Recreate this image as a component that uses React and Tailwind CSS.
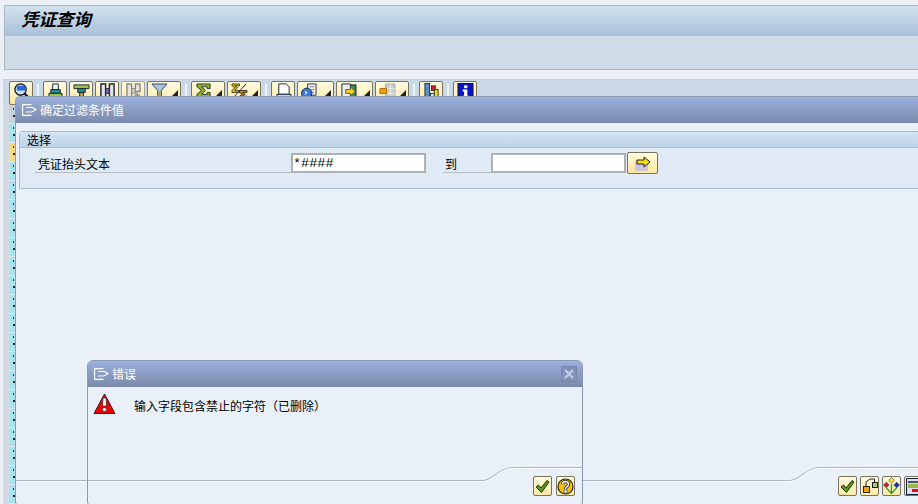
import React from 'react';

function Btn({ w = 'w-[24px]', children, drop, faded }) {
  return (
    <div className={`relative flex h-[24px] ${w} shrink-0 items-start rounded-[2px] border border-[#77735f] bg-gradient-to-b from-[#fffbe0] to-[#fde79c] pl-[3px] pt-px ${faded ? 'border-[#a5a294]' : ''}`}>
      {children}
      {drop && <span className="absolute top-[2px] bottom-[2px] right-[11px] w-px bg-[#fff8dc]" />}
      {drop && (
        <svg className="absolute right-[2px] top-[8px]" width="6" height="6"><path d="M6 0V6H0Z" fill="#222" /></svg>
      )}
    </div>
  );
}

const Sep = () => <div className="mx-[2px] mt-[3px] h-[16px] w-[2px] shrink-0 bg-[#eef3f8]" />;

const Ico = ({ children }) => <svg width="17" height="16" viewBox="0 0 18 17">{children}</svg>;

const Search = () => (
  <Ico>
    <circle cx="8" cy="7" r="6" fill="#cfe0f2" stroke="#223" strokeWidth="1.5" />
    <rect x="4" y="3" width="9" height="5" fill="#2a6ad8" />
    <path d="M12 11l5 5" stroke="#223" strokeWidth="2.5" />
  </Ico>
);
const Print = () => (
  <Ico>
    <path d="M6 1h6v6H6Z" fill="#f4f4f4" stroke="#123" />
    <path d="M4 7h10v4H4Z" fill="#2c8f8f" stroke="#123" />
    <path d="M2 11h14v5H2Z" fill="#9fc04a" stroke="#123" />
  </Ico>
);
const Funnel = () => (
  <Ico>
    <path d="M1 2h16v4H1Z" fill="#9fc04a" stroke="#123" />
    <path d="M5 6h8v4H5Z" fill="#2c8f8f" stroke="#123" />
    <path d="M7 10h4v6H7Z" fill="#c9a020" stroke="#123" />
  </Ico>
);
const Binoc = ({ c = '#6f6fa8', s = '#223' }) => (
  <Ico>
    <path d="M2 1h5v15H2ZM11 1h5v15h-5Z" fill="#dfe3f2" stroke={s} strokeWidth="1.5" />
    <path d="M7 6h4v5H7Z" fill={c} stroke={s} />
  </Ico>
);
const BinocPlus = () => (
  <Ico>
    <path d="M2 1h5v15H2ZM11 1h5v8h-5Z" fill="#e8e6da" stroke="#8b8b84" strokeWidth="1.5" />
    <path d="M7 6h4v5H7Z" fill="#c8c8c0" stroke="#8b8b84" />
    <path d="M13 10v6M10 13h6" stroke="#9a9a92" strokeWidth="2" />
  </Ico>
);
const Filter = () => (
  <Ico>
    <path d="M1 1h16l-6 7v8l-4-3V8Z" fill="#a9c4dc" stroke="#345" />
    <path d="M8 9h2v5H8Z" fill="#c9a020" />
  </Ico>
);
const Sum = () => (
  <Ico>
    <path d="M2 1h14v5h-3V4H7l4 4-4 4h6v-2h3v5H2v-3l5-4-5-4Z" fill="#8fb020" stroke="#234" />
  </Ico>
);
const SubSum = () => (
  <Ico>
    <path d="M1 1h8v2H4l3 2-3 3h5v2H1V8l3-3-3-2Z" fill="#e8c800" stroke="#111" strokeWidth=".8" />
    <path d="M9 8h8v2h-5l3 2-3 2h5v2H9v-2l3-2-3-2Z" fill="#ef8000" stroke="#111" strokeWidth=".8" />
    <path d="M16 1L2 16" stroke="#222" />
  </Ico>
);
const Doc = () => (
  <Ico>
    <path d="M4 1h8l3 3v8H4Z" fill="#fff" stroke="#123" />
    <path d="M2 12h15v4H2Z" fill="#bcd9ee" stroke="#123" />
  </Ico>
);
const Globe = () => (
  <Ico>
    <path d="M7 1h9v12H7Z" fill="#eee" stroke="#333" />
    <path d="M9 4h5M9 7h5M9 10h5" stroke="#789" />
    <circle cx="6" cy="11" r="5.500" fill="#3a78d8" stroke="#124" />
    <path d="M4 8l3 2-2 3z" fill="#dfeef8" />
  </Ico>
);
const Export = () => (
  <Ico>
    <path d="M9 2h8v14H9Z" fill="#3f8f3f" stroke="#123" />
    <path d="M2 1h9v15H2Z" fill="#eee" stroke="#123" />
    <path d="M6 7h5V4l5 5-5 5v-3H6Z" fill="#f7d820" stroke="#554" />
  </Ico>
);
const Grid = () => (
  <Ico>
    <path d="M7 1h10v15H7Z" fill="#ccc" stroke="#aaa" />
    <path d="M7 6h10M7 11h10M12 1v15" stroke="#eee" />
    <rect x="1" y="6" width="7" height="5" fill="#f7a010" stroke="#a60" />
  </Ico>
);
const Chart = () => (
  <Ico>
    <rect x="2" y="0.500" width="5" height="16" fill="#5b8fc0" stroke="#234" />
    <rect x="9" y="3" width="4" height="5" fill="#e02020" stroke="#234" />
    <rect x="8" y="11" width="4" height="6" fill="#dfeaf6" stroke="#234" />
    <rect x="12" y="7" width="4" height="10" fill="#f7d820" stroke="#234" />
  </Ico>
);
const Info = () => (
  <Ico>
    <rect x="1" y="0.500" width="16" height="16" fill="#0a12c8" stroke="#111" />
    <rect x="7.500" y="2.500" width="3.500" height="3" fill="#fff" />
    <path d="M6 7h5v6.500h1.500v2h-7v-2h2V9H6Z" fill="#fff" />
  </Ico>
);

const Check = () => (
  <svg width="15" height="15" viewBox="0 0 15 15">
    <path d="M1 8l2.500-2 2.500 3 6-7.500L14 3 6.500 13.500Z" fill="#5f9a10" stroke="#1c3006" strokeWidth="1" />
  </svg>
);
const Help = () => (
  <svg width="17" height="17" viewBox="0 0 17 17">
    <circle cx="8.500" cy="8.500" r="7.500" fill="#f7c400" stroke="#222" strokeWidth="1.200" />
    <path d="M5.500 6.500C5.500 2.500 11.500 2.500 11.500 6.500C11.500 8.800 8.500 8.500 8.500 11" fill="none" stroke="#222" strokeWidth="3.200" />
    <path d="M5.500 6.500C5.500 2.500 11.500 2.500 11.500 6.500C11.500 8.800 8.500 8.500 8.500 11" fill="none" stroke="#fff" strokeWidth="1.500" />
    <rect x="7" y="12" width="3" height="3" fill="#fff" stroke="#222" strokeWidth=".6" />
  </svg>
);
const Tree = () => (
  <svg width="16" height="16" viewBox="0 0 16 16">
    <rect x="1.500" y="8.500" width="6" height="6" fill="#f5a010" stroke="#222" />
    <rect x="10.500" y="4.500" width="5" height="5" fill="#a8c860" stroke="#222" />
    <path d="M4 8V4l4-3h4.500v3" fill="none" stroke="#222" />
  </svg>
);
const Diamonds = () => (
  <svg width="18" height="18" viewBox="0 0 18 18">
    <path d="M9 0l3 3-3 3-3-3Z" fill="#f7e020" stroke="#333" strokeWidth=".6" />
    <path d="M3.500 5l3 3-3 3-3-3Z" fill="#e02020" stroke="#333" strokeWidth=".6" />
    <path d="M14.500 5l3 3-3 3-3-3Z" fill="#1030d0" stroke="#333" strokeWidth=".6" />
    <path d="M9 7v10M3.500 11L9 17l5.500-6" fill="none" stroke="#3a9a20" strokeWidth="1.500" />
  </svg>
);
const Layout = () => (
  <svg width="15" height="17" viewBox="0 0 15 17">
    <rect x="0.500" y="0.500" width="14" height="16" fill="#dde" stroke="#123" />
    <rect x="2" y="3" width="11" height="2" fill="#456" />
    <rect x="2" y="6" width="11" height="4" fill="#9ab840" />
    <rect x="6" y="11" width="9" height="3" fill="#e01010" />
  </svg>
);

const SmallBtn = ({ children }) => (
  <div className="flex h-[20px] w-[19px] shrink-0 items-center justify-center rounded-[2px] border border-[#77735f] bg-gradient-to-b from-[#fffbe0] to-[#fdeaa6]">
    {children}
  </div>
);

const WinIcon = () => (
  <svg width="15" height="12" viewBox="0 0 15 12" className="shrink-0">
    <path d="M9.500 .6H.6V11.400H9.500M4 3.500h6l4 2-4 2.500H4" fill="none" stroke="#fff" strokeWidth="1.200" />
  </svg>
);

function TitleBar({ children, right }) {
  return (
    <div className="flex h-[26px] shrink-0 items-center bg-gradient-to-b from-[#9bb0dd] to-[#7a8aab] pl-[6px] text-[12px] text-white">
      <WinIcon />
      <span className="ml-[3px]">{children}</span>
      {right}
    </div>
  );
}

// footer rule that steps up near the buttons
const Curve = ({ w, x }) => {
  const d = (o) => `M0 ${14.5 + o}H${x}C${x + 10} ${14.5 + o} ${x + 16} ${1.5 + o} ${x + 30} ${1.5 + o}H${w}`;
  return (
    <svg className="block" width={w} height="18" viewBox={`0 0 ${w} 18`}>
      <path d={d(0)} fill="none" stroke="#aab6c6" strokeWidth="1.200" />
      <path d={d(1)} fill="none" stroke="#fbfdff" strokeWidth="1" />
    </svg>
  );
};

export default function App() {
  const cells = Array.from({ length: 21 });
  return (
    <div className="relative h-[504px] w-[918px] overflow-hidden bg-[#eaf0f6] text-[12px] text-black [font-family:'Noto_Sans_CJK_SC','Liberation_Sans',sans-serif]">
      <div className="ml-[4px] mt-[5px] border-t border-l border-[#a9b5c1]">
        <div className="flex h-[30px] items-center bg-gradient-to-b from-[#d2e1ee] to-[#a9c1d9] pb-[4px] pl-[16px] text-[17.5px] font-bold italic">
          凭证查询
        </div>
        <div className="h-[34px] border-b border-[#a9b5c1] bg-[#cfdce7]" />
      </div>

      <div className="ml-[3px] mt-[9px] flex h-[26px] items-start gap-[2px] border-t border-[#c3d0dc] bg-[#cbd9e6] pl-[6px] pt-px">
        <Btn><Search /></Btn>
        <Sep />
        <Btn><Print /></Btn>
        <Btn><Funnel /></Btn>
        <Btn><Binoc /></Btn>
        <Btn faded><BinocPlus /></Btn>
        <Btn w="w-[34px]" drop><Filter /></Btn>
        <Sep />
        <Btn w="w-[34px]" drop><Sum /></Btn>
        <Btn w="w-[34px]" drop><SubSum /></Btn>
        <Sep />
        <Btn><Doc /></Btn>
        <Btn w="w-[37px]" drop><Globe /></Btn>
        <Btn w="w-[37px]" drop><Export /></Btn>
        <Btn w="w-[34px]" drop><Grid /></Btn>
        <Sep />
        <Btn><Chart /></Btn>
        <Sep />
        <Btn><Info /></Btn>
      </div>

      <div className="ml-[3px] mt-[-1px] flex h-[408px] w-[12px] flex-col bg-[#d3dbe3] pl-[6px] pt-px">
        {cells.map((_, i) => (
          <div key={i} className={`relative h-[19px] w-[6px] shrink-0 border-b border-[#dfe8ee] ${i === 2 ? 'bg-[#fcd983]' : i === 0 ? 'bg-[#c5d1dc]' : 'bg-[#a8e2f0]'}`}>
            <span className="absolute right-[1px] top-[3px] h-[2px] w-px bg-[#333]" />
            <span className="absolute right-0 top-[10px] h-[2px] w-[2px] bg-[#2a2a20]" />
          </div>
        ))}
      </div>

      {/* Filter value window */}
      <div className="absolute left-[15px] top-[96px] flex h-[410px] w-[920px] flex-col rounded-tl-[5px] rounded-bl-[4px] border border-[#8b99b3] bg-[#e9f0f7]">
        <TitleBar>确定过滤条件值</TitleBar>
        <div className="ml-[3px] mt-[8px] h-[58px] shrink-0 rounded-tl-[3px] border border-[#a3bfd8] bg-[#dfeaf4]">
          <div className="flex h-[16px] items-center border-b border-[#a3bfd8] bg-gradient-to-b from-[#d3e3f1] to-[#bdd3e7] pl-[7px] pt-px leading-none">
            选择
          </div>
          <div className="ml-[15px] mt-[5px] flex items-start">
            <div className="flex h-[20px] w-[256px] items-center border-b border-[#b8bcc0] pl-[3px] pt-[2px]">凭证抬头文本</div>
            <div className="flex h-[20px] w-[135px] items-center border-2 border-[#adb1b4] bg-white pt-px font-['Liberation_Mono',monospace] text-[13.5px] leading-none">
              *####
            </div>
            <div className="ml-[17px] flex h-[20px] w-[48px] items-center border-b border-[#b8bcc0] pl-[2px] pt-[2px]">到</div>
            <div className="h-[20px] w-[135px] border-2 border-[#adb1b4] bg-white" />
            <div className="relative ml-px mt-[-1px] flex h-[22px] w-[31px] items-center justify-center rounded-[2px] border border-[#77735f] bg-gradient-to-b from-[#fffbe0] to-[#fde79c]">
              <svg width="18" height="15" viewBox="0 0 18 15">
                <rect x="1" y="5" width="13" height="10" fill="#cfc4de" />
                <path d="M3 4h7V1l6 5-6 5V8H3Z" fill="#f7dc10" stroke="#222" />
              </svg>
            </div>
          </div>
        </div>
        <div className="mt-[277px] shrink-0">
          <Curve w={920} x={774} />
        </div>
        <div className="ml-[822px] mt-[-8px] flex gap-[3px]">
          <SmallBtn><Check /></SmallBtn>
          <SmallBtn><Tree /></SmallBtn>
          <SmallBtn><Diamonds /></SmallBtn>
          <SmallBtn><Layout /></SmallBtn>
        </div>
      </div>

      {/* Error popup */}
      <div className="absolute left-[87px] top-[360px] flex h-[146px] w-[496px] flex-col overflow-hidden rounded-t-[6px] rounded-b-[4px] border border-[#8b99b3] bg-[#e9f0f7]">
        <TitleBar
          right={
            <div className="ml-auto mr-[5px] flex h-[16px] w-[16px] items-center justify-center border border-[#7586a8] bg-[#8291b5]">
              <svg width="10" height="10" viewBox="0 0 10 10">
                <path d="M1 1l8 8M9 1l-8 8" stroke="#c3cfe8" strokeWidth="2" />
              </svg>
            </div>
          }
        >
          错误
        </TitleBar>
        <div className="flex h-[36px] shrink-0 items-start pl-[5px] pt-[6px]">
          <svg width="23" height="22" viewBox="0 0 23 22" className="shrink-0">
            <path d="M11.500 1L22 20.500H1Z" fill="#ee0000" stroke="#222" strokeLinejoin="round" />
            <path d="M10 5h3l.5 8h-4Z" fill="#fff" stroke="#222" strokeWidth=".6" />
            <circle cx="11.500" cy="16.500" r="2" fill="#fff" stroke="#222" strokeWidth=".6" />
          </svg>
          <span className="ml-[18px] mt-[4px]">输入字段包含禁止的字符（已删除）</span>
        </div>
        <div className="mt-[43px] shrink-0">
          <Curve w={496} x={395} />
        </div>
        <div className="ml-[445px] mt-[-8px] flex gap-[4px]">
          <SmallBtn><Check /></SmallBtn>
          <SmallBtn><Help /></SmallBtn>
        </div>
      </div>
    </div>
  );
}
